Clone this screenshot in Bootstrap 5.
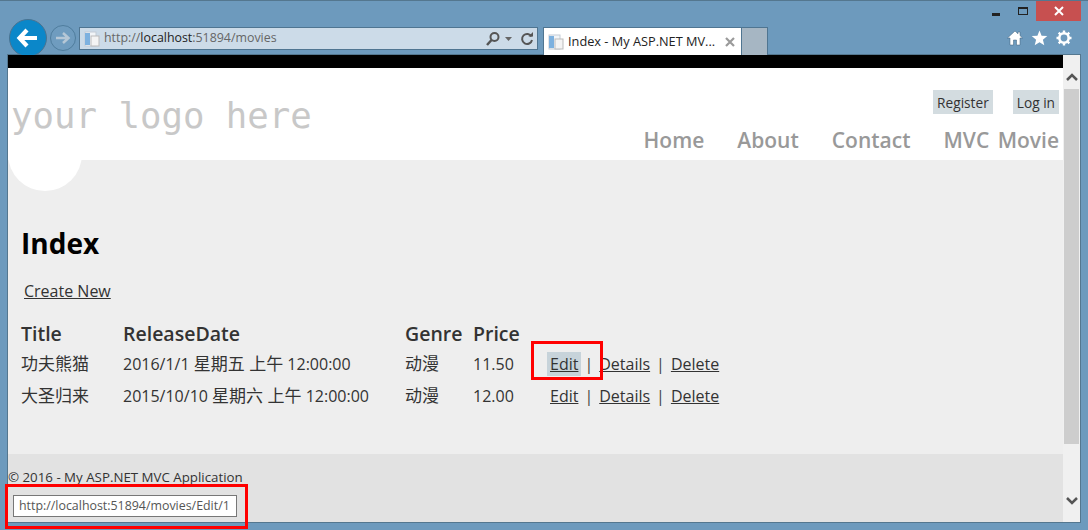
<!DOCTYPE html>
<html lang="en">
<head>
<meta charset="utf-8">
<title>Index - My ASP.NET MVC Application</title>
<link rel="stylesheet" href="https://cdn.jsdelivr.net/npm/bootstrap@5.3.0/dist/css/bootstrap.min.css">
<style>
html,body{height:530px;overflow:hidden;margin:0;background:#6d9abd;}
body{font-family:"Open Sans","Noto Sans CJK SC",sans-serif;color:#333;}
.ie-win{width:1088px;height:530px;position:relative;border-top:1px solid #54778f;}
.ie-caption{height:26px;padding-right:7px;}
.cap-min{width:8px;height:3px;background:#222;margin:12px 18px 0 0;}
.cap-max{width:10px;height:8px;border:1px solid #222;border-top-width:2px;margin:6px 8px 0 0;}
.cap-close{width:45px;height:20px;background:#c75050;color:#fff;}
.ie-bar{height:28px;padding-left:9px;}
.ie-back{width:38px;height:38px;border-radius:50%;background:#0b87c9;border:1px solid #4a7391;margin-top:-8px;flex:none;}
.ie-fwd{width:26px;height:26px;border-radius:50%;border:1px solid #4f7d9d;background:#6f9cbf;margin:-2px 3px 0 3px;flex:none;}
.ie-addr{width:459px;height:23px;background:#ccdbe8;border:1px solid #4f7591;font-size:12.4px;color:#666;padding:0 3px 0 4px;flex:none;}
.ie-addr b{font-weight:400;color:#222;}
.ie-tab{width:199px;height:28px;background:#fff;margin-left:5px;border:1px solid #4f7591;border-width:1px 1px 0 1px;font-size:12.75px;color:#222;padding:0 6px 0 4px;flex:none;white-space:nowrap;}
.ie-newtab{width:26px;height:28px;background:#a6b6c3;border:1px solid #4f7591;border-width:1px 1px 0 0;flex:none;}
.ie-tools{margin-left:auto;padding:3px 16px 0 0;gap:8px;}
.ie-body{height:467px;margin:0 8px;background:#fff;box-shadow:0 0 0 1px #54778f;}
.ie-page{width:1055px;flex:none;background:#eee;position:relative;overflow:hidden;}
.ie-scroll{width:17px;background:#f0f0f0;flex:none;}
.sc-thumb{height:355px;background:#cdcdcd;margin:0 1px;}
.sc-top{height:34px;padding-top:10px;}
.sc-bot{height:21px;margin-bottom:11px;}
.pg-black{height:13px;background:#000;flex:none;}
.pg-head{height:92px;background:#fff;position:relative;z-index:0;flex:none;}
.logo-txt{font-family:"DejaVu Sans Mono",monospace;font-size:35.7px;color:#c8c8c8;line-height:40px;padding:28px 0 0 3px;margin:0;}
.acct{gap:20px;padding:22px 4px 0 0;font-size:13.7px;}
.acct a,.acct a:hover{background:#d3dce0;color:#333;text-decoration:none;padding:1px 4px 0;line-height:23px;display:block;}
.mainnav{gap:33px;padding:11px 4px 0 0;font-size:21px;font-weight:600;line-height:30px;word-spacing:3px;}
.mainnav a{color:#999;text-decoration:none;}
.logo-disc{position:absolute;left:0;top:49px;width:74px;height:74px;background:#fff;border-radius:50%;z-index:-1;}
.pg-main{height:294px;padding:63px 13px 0 13px;flex:none;}
.pg-title{font-size:28px;font-weight:700;color:#000;line-height:40px;margin:0 0 16px;}
.pg-link{color:#333;font-size:16px;line-height:22px;display:inline-block;margin:0 0 19px 3px;}
.mv-table{--bs-table-bg:transparent;--bs-table-color:#333;margin:0;width:auto;font-size:16px;table-layout:fixed;}
.mv-table th,.mv-table td{padding:0;border:0;white-space:nowrap;vertical-align:middle;}
.mv-table th{font-size:19.500px;font-weight:600;line-height:26px;padding-bottom:1px;}
.mv-table td{line-height:31px;}
.mv-table a{color:#333;}
.mv-table .edit-cell a{padding:0 3px;display:inline-block;line-height:24px;}
.mv-table .is-hover{background:#c7d3da;}
.cjk-txt{font-size:17px;}
.act-sep{margin:0 3px;color:#444;}
.pg-foot{height:68px;background:#e2e2e2;font-size:13.300px;line-height:20px;padding-top:13px;color:#333;flex:none;}
.status-tip{position:absolute;left:5px;top:440px;width:224px;height:22px;background:#fff;border:1px solid #777;font-size:12.400px;line-height:20px;padding-left:5px;color:#555;white-space:nowrap;overflow:hidden;}
.red-box{position:absolute;border:3px solid #f00;pointer-events:none;}
</style>
</head>
<body>
<div class="ie-win">
  <div class="ie-caption d-flex justify-content-end align-items-start">
    <div class="cap-min"></div>
    <div class="cap-max"></div>
    <div class="cap-close d-flex align-items-center justify-content-center">
      <svg width="10" height="10" viewBox="0 0 10 10"><path d="M1 1 9 9M9 1 1 9" stroke="#fff" stroke-width="2"/></svg>
    </div>
  </div>
  <div class="ie-bar d-flex align-items-start">
    <div class="ie-back d-flex align-items-center justify-content-center">
      <svg width="24" height="22" viewBox="0 0 24 22"><path d="M21 11H5M11 3 3.500 11 11 19" fill="none" stroke="#fff" stroke-width="4.200"/></svg>
    </div>
    <div class="ie-fwd d-flex align-items-center justify-content-center">
      <svg width="16" height="14" viewBox="0 0 16 14"><path d="M1 7H13M8 2 13.500 7 8 12" fill="none" stroke="#b5c7d6" stroke-width="2.500"/></svg>
    </div>
    <div class="ie-addr d-flex align-items-center">
      <svg class="me-1" width="16" height="16" viewBox="0 0 16 16"><rect x="1" y="1" width="11" height="14" fill="#f2f5f8" stroke="#c3ccd5"/><rect x="1" y="2" width="5" height="12" fill="#7db1df"/><rect x="7" y="5" width="8" height="10" fill="#f4f4f4" stroke="#bbb"/></svg>
      <span>http://<b>localhost</b>:51894/movies</span>
      <span class="ms-auto d-flex align-items-center">
        <svg width="16" height="16" viewBox="0 0 16 16"><circle cx="9.500" cy="6" r="4" fill="none" stroke="#555" stroke-width="2"/><path d="M6.500 9 2 14" stroke="#555" stroke-width="2.500"/></svg>
        <svg class="mx-1" width="7" height="4" viewBox="0 0 7 4"><path d="M0 0H7L3.500 4Z" fill="#666"/></svg>
        <svg class="ms-1" width="14" height="14" viewBox="0 0 14 14"><path d="M11.500 4.500A5 5 0 1 0 12 8" fill="none" stroke="#555" stroke-width="2"/><path d="M8.500 4.500H13V0Z" fill="#555"/></svg>
      </span>
    </div>
    <div class="ie-tab d-flex align-items-center">
      <svg class="me-1" width="16" height="16" viewBox="0 0 16 16"><rect x="1" y="1" width="11" height="14" fill="#f2f5f8" stroke="#c3ccd5"/><rect x="1" y="2" width="5" height="12" fill="#7db1df"/><rect x="7" y="5" width="8" height="10" fill="#f4f4f4" stroke="#bbb"/></svg>
      <span>Index - My ASP.NET MV...</span>
      <svg class="ms-auto" width="10" height="10" viewBox="0 0 10 10"><path d="M1 1 9 9M9 1 1 9" stroke="#9a9a9a" stroke-width="2.200"/></svg>
    </div>
    <div class="ie-newtab"></div>
    <div class="ie-tools d-flex align-items-center">
      <svg width="16" height="16" viewBox="0 0 16 16"><path d="M8 1 0.500 8H3V15H6.500V10H9.500V15H13V8H15.500L13 5.600V2H11V3.800Z" fill="#fff" stroke="#3d5f78" stroke-width=".5"/></svg>
      <svg width="17" height="16" viewBox="0 0 17 16"><path d="M8.500 0.500 10.600 5.700 16.300 6.100 11.900 9.700 13.300 15.200 8.500 12.200 3.700 15.200 5.100 9.700 0.700 6.100 6.400 5.700Z" fill="#fff"/></svg>
      <svg width="16" height="16" viewBox="0 0 16 16"><circle cx="8" cy="8" r="4.700" fill="none" stroke="#fff" stroke-width="2.600"/><path d="M8 .5V3M8 13V15.500M.5 8H3M13 8H15.500M2.700 2.700 4.500 4.500M11.500 11.500 13.300 13.300M13.300 2.700 11.500 4.500M4.500 11.500 2.700 13.300" stroke="#fff" stroke-width="2.400"/></svg>
    </div>
  </div>
  <div class="ie-body d-flex">
    <div class="ie-page d-flex flex-column">
      <div class="pg-black"></div>
      <header class="pg-head d-flex justify-content-between">
        <p class="logo-txt">your logo here</p>
        <div class="d-flex flex-column align-items-end">
          <div class="acct d-flex"><a href="#">Register</a><a href="#">Log in</a></div>
          <nav class="mainnav d-flex"><a href="#">Home</a><a href="#">About</a><a href="#">Contact</a><a href="#">MVC Movie</a></nav>
        </div>
        <div class="logo-disc"></div>
      </header>
      <main class="pg-main">
        <h2 class="pg-title">Index</h2>
        <a class="pg-link" href="#">Create New</a>
        <table class="table table-borderless mv-table">
          <colgroup><col style="width:102px"><col style="width:282px"><col style="width:68px"><col style="width:74px"><col style="width:190px"></colgroup>
          <thead><tr><th>Title</th><th>ReleaseDate</th><th>Genre</th><th>Price</th><th></th></tr></thead>
          <tbody>
            <tr><td><span class="cjk-txt">功夫熊猫</span></td><td>2016/1/1 <span class="cjk-txt">星期五 上午</span> 12:00:00</td><td><span class="cjk-txt">动漫</span></td><td>11.50</td><td class="edit-cell"><a class="is-hover" href="#">Edit</a><span class="act-sep">|</span><a href="#">Details</a><span class="act-sep">|</span><a href="#">Delete</a></td></tr>
            <tr><td><span class="cjk-txt">大圣归来</span></td><td>2015/10/10 <span class="cjk-txt">星期六 上午</span> 12:00:00</td><td><span class="cjk-txt">动漫</span></td><td>12.00</td><td class="edit-cell"><a href="#">Edit</a><span class="act-sep">|</span><a href="#">Details</a><span class="act-sep">|</span><a href="#">Delete</a></td></tr>
          </tbody>
        </table>
      </main>
      <footer class="pg-foot">© 2016 - My ASP.NET MVC Application</footer>
      <div class="status-tip">http://localhost:51894/movies/Edit/1</div>
    </div>
    <div class="ie-scroll d-flex flex-column">
      <div class="sc-top d-flex align-items-center justify-content-center"><svg width="12" height="8" viewBox="0 0 12 8"><path d="M1 7 6 2 11 7" fill="none" stroke="#555" stroke-width="2.500"/></svg></div>
      <div class="sc-thumb"></div>
      <div class="sc-bot mt-auto d-flex align-items-center justify-content-center"><svg width="12" height="8" viewBox="0 0 12 8"><path d="M1 1 6 6 11 1" fill="none" stroke="#555" stroke-width="2.500"/></svg></div>
    </div>
  </div>
  <div class="red-box" style="left:531px;top:340px;width:72px;height:39px"></div>
  <div class="red-box" style="left:5px;top:483px;width:243px;height:45px"></div>
</div>
</body>
</html>
